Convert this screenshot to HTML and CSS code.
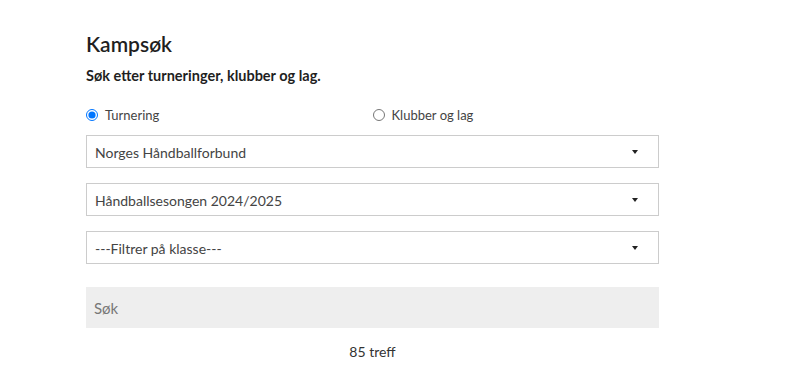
FILE: index.html
```html
<!DOCTYPE html>
<html lang="no">
<head>
<meta charset="utf-8">
<title>Kampsøk</title>
<link rel="stylesheet" href="styles.css">
</head>
<body>
<main class="page">
  <h1 class="title">Kampsøk</h1>
  <p class="subtitle">Søk etter turneringer, klubber og lag.</p>
  <div class="radios">
    <label class="radio"><input type="radio" name="type" checked> Turnering</label>
    <label class="radio"><input type="radio" name="type"> Klubber og lag</label>
  </div>
  <div class="selects">
    <div class="select"><span>Norges Håndballforbund</span><span class="caret"></span></div>
    <div class="select"><span>Håndballsesongen 2024/2025</span><span class="caret"></span></div>
    <div class="select"><span>---Filtrer på klasse---</span><span class="caret"></span></div>
  </div>
  <input class="search" type="text" placeholder="Søk">
  <p class="count">85 treff</p>
</main>
</body>
</html>
```
FILE: styles.css
```css
html, body {
  margin: 0;
  background: #ffffff;
}
body {
  font-family: Lato, "Open Sans", sans-serif;
  color: #333333;
}
.page {
  width: 573px;
  padding: 31px 0 0 86px;
}
.title {
  margin: 0;
  font-size: 21px;
  line-height: 26px;
  font-weight: 600;
  color: #1f1f1f;
}
.subtitle {
  margin: 9px 0 0;
  font-size: 14.5px;
  line-height: 20px;
  font-weight: 700;
  color: #1f1f1f;
}
.radios {
  margin-top: 19px;
  display: grid;
  grid-template-columns: 1fr 1fr;
  height: 20px;
}
.radio {
  display: flex;
  align-items: center;
  gap: 7px;
  font-size: 13px;
  color: #444444;
}
.radio input {
  margin: 0;
  width: 12px;
  height: 12px;
}
.selects {
  margin-top: 10px;
  display: flex;
  flex-direction: column;
  gap: 15px;
}
.select {
  height: 33px;
  box-sizing: border-box;
  border: 1px solid #cccccc;
  display: flex;
  align-items: center;
  justify-content: space-between;
  padding: 1px 20px 0 8px;
  font-size: 14px;
  color: #444444;
}
.caret {
  width: 0;
  height: 0;
  border-top: 4px solid #222222;
  border-left: 3px solid transparent;
  border-right: 3px solid transparent;
}
.search {
  display: block;
  margin-top: 23px;
  width: 100%;
  height: 41px;
  box-sizing: border-box;
  border: none;
  background: #eeeeee;
  padding: 0 8px;
  font-family: inherit;
  font-size: 15px;
  color: #444444;
  outline: none;
}
.search::placeholder {
  color: #777777;
}
.count {
  margin: 15px 0 0;
  text-align: center;
  font-size: 14px;
  line-height: 18px;
  color: #333333;
}
```
